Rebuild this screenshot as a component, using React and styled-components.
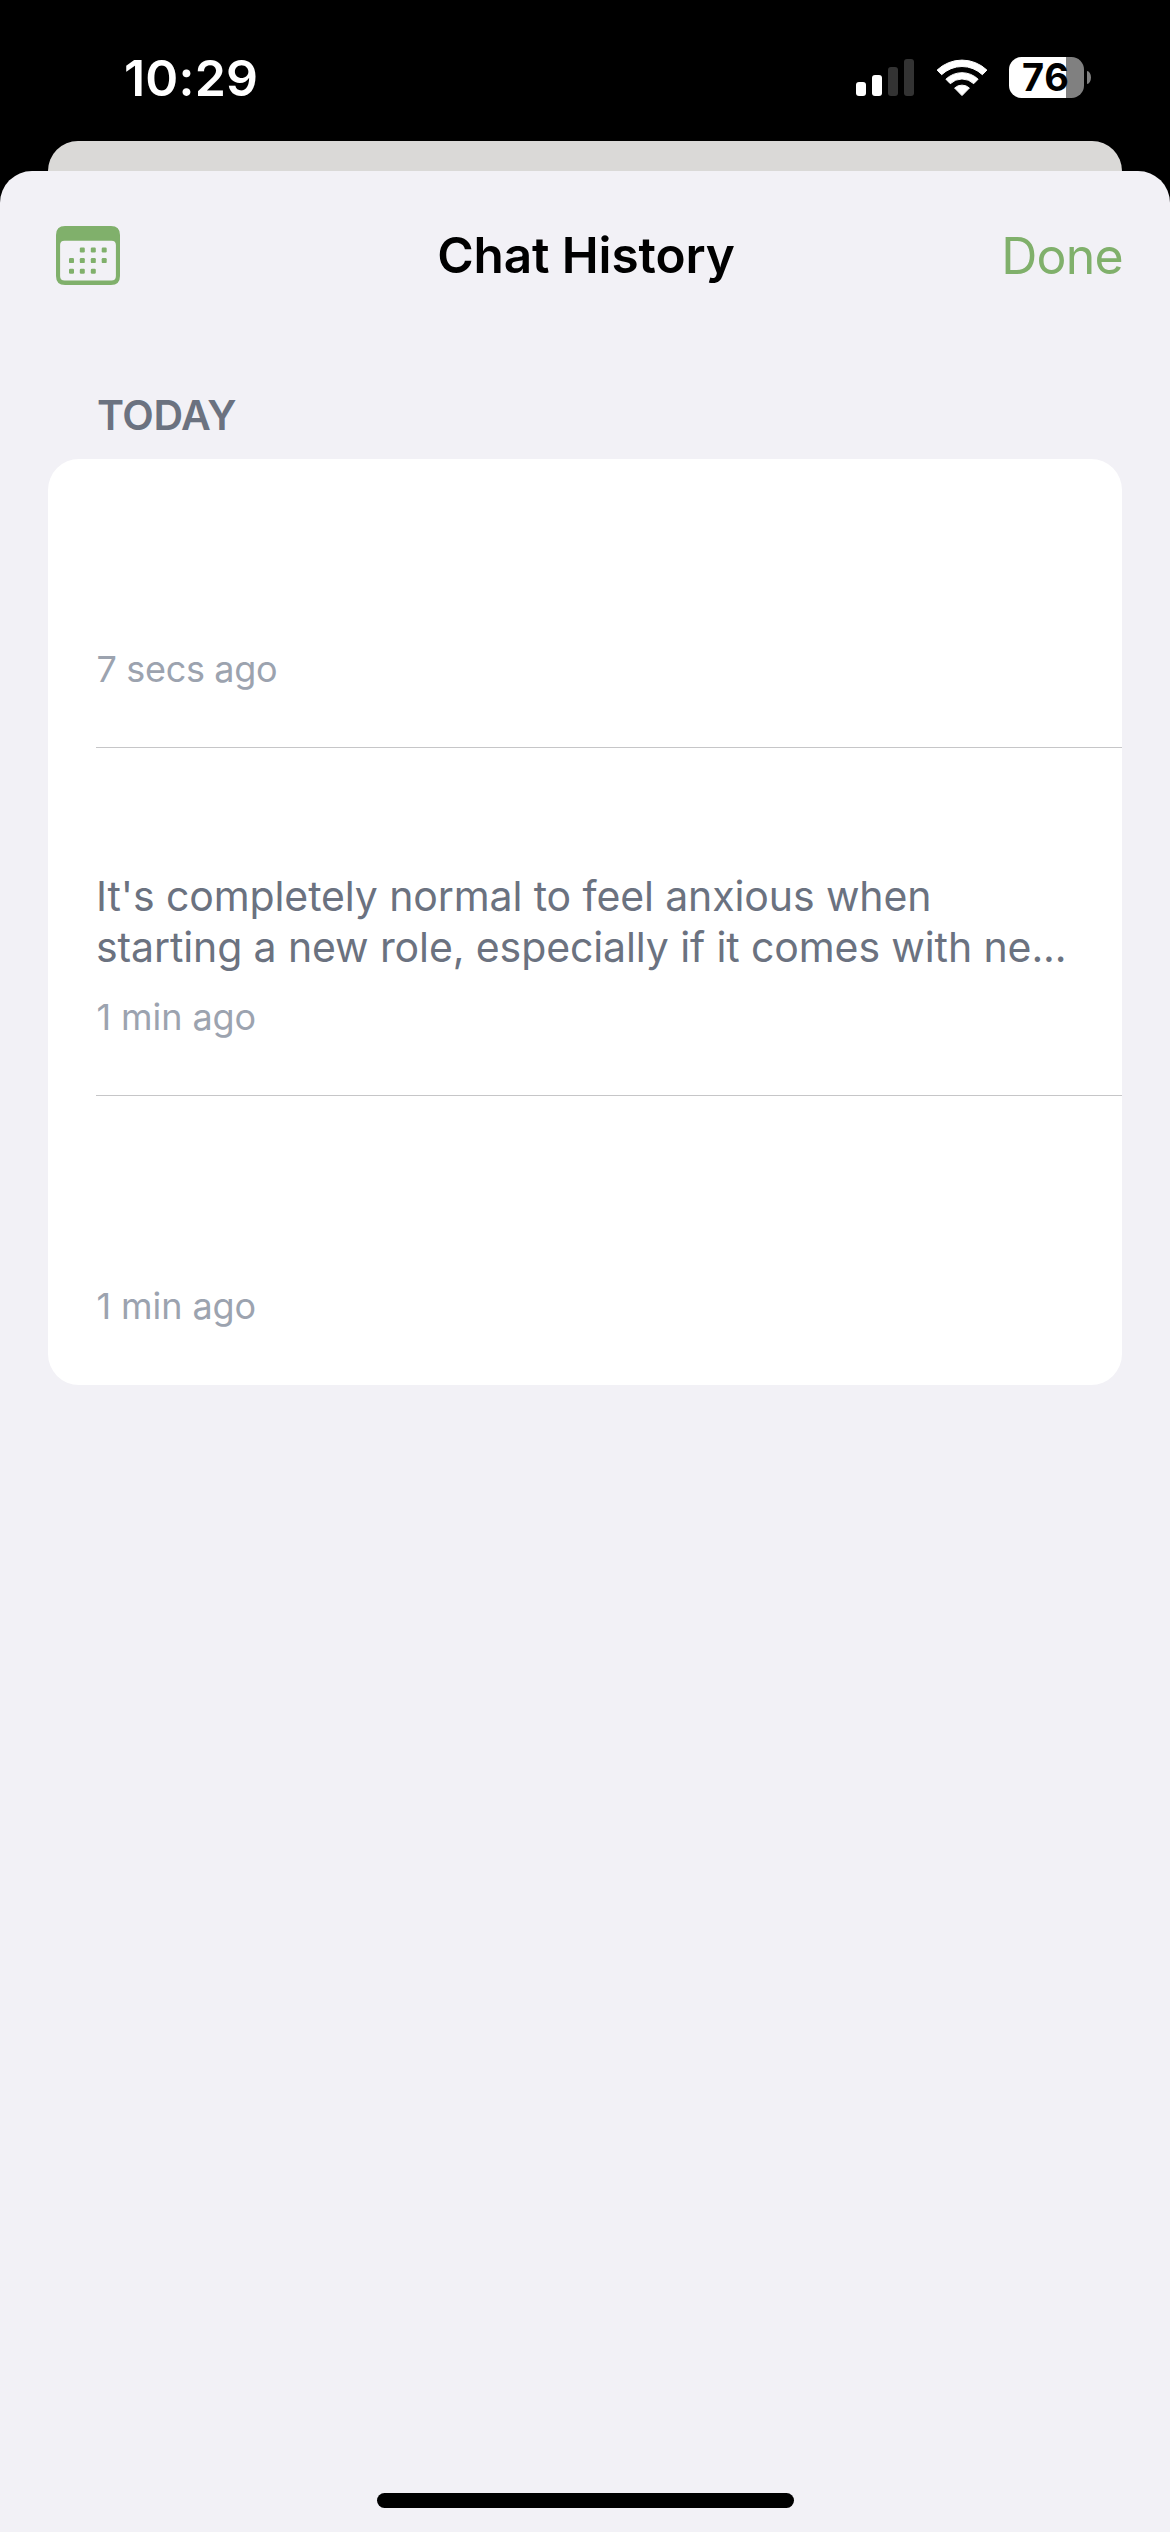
import React from 'react';
import styled, { createGlobalStyle } from 'styled-components';

const GlobalStyle = createGlobalStyle`
  *, *::before, *::after { box-sizing: border-box; }
  body {
    margin: 0;
    background: #000;
    font-family: Inter, "Liberation Sans", sans-serif;
    -webkit-font-smoothing: antialiased;
  }
`;

const Screen = styled.div`
  display: flex;
  flex-direction: column;
  width: 1170px;
  height: 2532px;
  background: #000;
  overflow: hidden;
`;

const StatusBar = styled.div`
  display: flex;
  align-items: center;
  justify-content: space-between;
  flex: none;
  height: 141px;
  padding: 14px 79px 0 124px;
  color: #fff;
`;

const Clock = styled.div`
  padding-top: 1px;
  font-size: 50px;
  font-weight: 600;
  line-height: 60px;
  letter-spacing: 0.2px;
`;

const StatusIcons = styled.div`
  display: flex;
  align-items: center;
  gap: 21.5px;
`;

const Signal = styled.div`
  display: flex;
  align-items: flex-end;
  gap: 6px;
  height: 37px;
`;

const SignalBar = styled.span`
  width: 10px;
  height: ${(p) => p.$height}px;
  border-radius: 3px;
  background: ${(p) => (p.$on ? '#fff' : '#333')};
`;

const Battery = styled.div`
  display: flex;
  align-items: center;
  gap: 3px;
`;

const BatteryBody = styled.div`
  display: flex;
  align-items: center;
  width: 75px;
  height: 41px;
  padding-left: 13px;
  border-radius: 12.5px;
  background: linear-gradient(to right, #fff 57px, #808080 57px);
  color: #000;
  font-size: 38px;
  font-weight: 700;
  line-height: 41px;
  letter-spacing: 0.8px;
`;

const BatteryNub = styled.div`
  width: 4px;
  height: 13px;
  border-radius: 0 4px 4px 0 / 0 6.5px 6.5px 0;
  background: #808080;
`;

const SheetBehind = styled.div`
  flex: none;
  height: 30px;
  margin: 0 48px;
  border-radius: 30px 30px 0 0;
  background: #dad9d7;
`;

const Sheet = styled.main`
  display: flex;
  flex-direction: column;
  flex: 1;
  border-radius: 32px 32px 0 0;
  background: #f2f1f6;
`;

const Header = styled.header`
  display: grid;
  grid-template-columns: 1fr auto 1fr;
  align-items: center;
  height: 169px;
  padding: 0 47px 0 56px;
`;

const IconButton = styled.button`
  display: flex;
  justify-self: start;
  padding: 0;
  border: 0;
  background: none;
  color: #80b06b;
`;

const Title = styled.h1`
  margin: 0;
  padding: 0 7px 1px 0;
  font-size: 49.5px;
  font-weight: 600;
  line-height: 60px;
  letter-spacing: -0.1px;
  color: #000;
`;

const DoneButton = styled.button`
  justify-self: end;
  padding: 1px 0 0;
  border: 0;
  background: none;
  color: #80b06b;
  font-family: inherit;
  font-size: 50px;
  line-height: 60px;
  letter-spacing: -0.75px;
`;

const Section = styled.section`
  display: flex;
  flex-direction: column;
  padding: 50px 48px 0;
`;

const SectionLabel = styled.h2`
  margin: 0;
  padding: 0 49px 19px;
  font-size: 41px;
  font-weight: 600;
  line-height: 50px;
  letter-spacing: -0.45px;
  color: #6b7280;
`;

const Card = styled.ul`
  margin: 0;
  padding: 0 0 0 48px;
  list-style: none;
  border-radius: 31px;
  background: #fff;
`;

const Row = styled.li`
  display: flex;
  flex-direction: column;
  justify-content: flex-end;
  gap: 22px;
  height: ${(p) => (p.$tall ? 348 : 289)}px;
  padding-bottom: 56px;
  border-bottom: 1px solid #c6c6c8;

  &:last-child { border-bottom-color: transparent; }
`;

const Preview = styled.p`
  margin: 0;
  font-size: 41px;
  line-height: 51px;
  letter-spacing: -0.11px;
  white-space: nowrap;
  color: #6b7280;
`;

const Time = styled.time`
  padding-left: 0.5px;
  font-size: 36px;
  line-height: 44px;
  letter-spacing: ${(p) => p.$tracking}px;
  color: #9ca3af;
`;

const Footer = styled.footer`
  display: flex;
  justify-content: center;
  margin-top: auto;
  padding-bottom: 24px;
`;

const HomeIndicator = styled.div`
  width: 417px;
  height: 15px;
  border-radius: 8px;
  background: #000;
`;

const bars = [
  { height: 14, on: true },
  { height: 21, on: true },
  { height: 29, on: false },
  { height: 37, on: false },
];

const chats = [
  { time: '7 secs ago', tracking: -0.33 },
  {
    lines: [
      "It's completely normal to feel anxious when",
      'starting a new role, especially if it comes with ne...',
    ],
    time: '1 min ago',
    tracking: -0.09,
  },
  { time: '1 min ago', tracking: -0.09 },
];

const dots = [
  [15.5, 24], [26.3, 24], [37.3, 24], [48.2, 24],
  [15.5, 34.6], [26.3, 34.6], [37.3, 34.6], [48.2, 34.6],
  [15.5, 45.3], [26.3, 45.3], [37.3, 45.3],
].slice(1);

function WifiIcon() {
  return (
    <svg width="52" height="38" viewBox="0 0 52 38" fill="#fff" stroke="#fff" strokeWidth="1" strokeLinejoin="round">
      <path d="M1.1 11.1A36 36 0 0 1 50.9 11.1L46.4 15.7A29.5 29.5 0 0 0 5.6 15.7Z" />
      <path d="M9.9 20.2A23.2 23.2 0 0 1 42.1 20.2L37.7 24.7A16.8 16.8 0 0 0 14.3 24.7Z" />
      <path d="M18.6 29A11 11 0 0 1 33.4 29L26 36.6Z" />
    </svg>
  );
}

function CalendarIcon() {
  return (
    <svg width="64" height="59" viewBox="0 0 64 59" fill="currentColor">
      <path
        fillRule="evenodd"
        d="M9 0H55Q64 0 64 9V50Q64 59 55 59H9Q0 59 0 50V9Q0 0 9 0ZM8.5 14.7Q4.1 14.7 4.1 19.1V50Q4.1 54.6 8.7 54.6H55.3Q59.9 54.6 59.9 50V19.1Q59.9 14.7 55.5 14.7Z"
      />
      {dots.map(([x, y]) => (
        <rect key={`${x}-${y}`} x={x - 2.5} y={y - 2.5} width="5" height="5" rx="1.2" />
      ))}
    </svg>
  );
}

export default function App() {
  return (
    <Screen>
      <GlobalStyle />
      <StatusBar>
        <Clock>10:29</Clock>
        <StatusIcons>
          <Signal>
            {bars.map((bar) => (
              <SignalBar key={bar.height} $height={bar.height} $on={bar.on} />
            ))}
          </Signal>
          <WifiIcon />
          <Battery>
            <BatteryBody>76</BatteryBody>
            <BatteryNub />
          </Battery>
        </StatusIcons>
      </StatusBar>
      <SheetBehind />
      <Sheet>
        <Header>
          <IconButton aria-label="Calendar">
            <CalendarIcon />
          </IconButton>
          <Title>Chat History</Title>
          <DoneButton>Done</DoneButton>
        </Header>
        <Section>
          <SectionLabel>TODAY</SectionLabel>
          <Card>
            {chats.map((chat, i) => (
              <Row key={i} $tall={Boolean(chat.lines)}>
                {chat.lines && (
                  <Preview>
                    {chat.lines[0]}
                    <br />
                    {chat.lines[1]}
                  </Preview>
                )}
                <Time $tracking={chat.tracking}>{chat.time}</Time>
              </Row>
            ))}
          </Card>
        </Section>
        <Footer>
          <HomeIndicator />
        </Footer>
      </Sheet>
    </Screen>
  );
}
